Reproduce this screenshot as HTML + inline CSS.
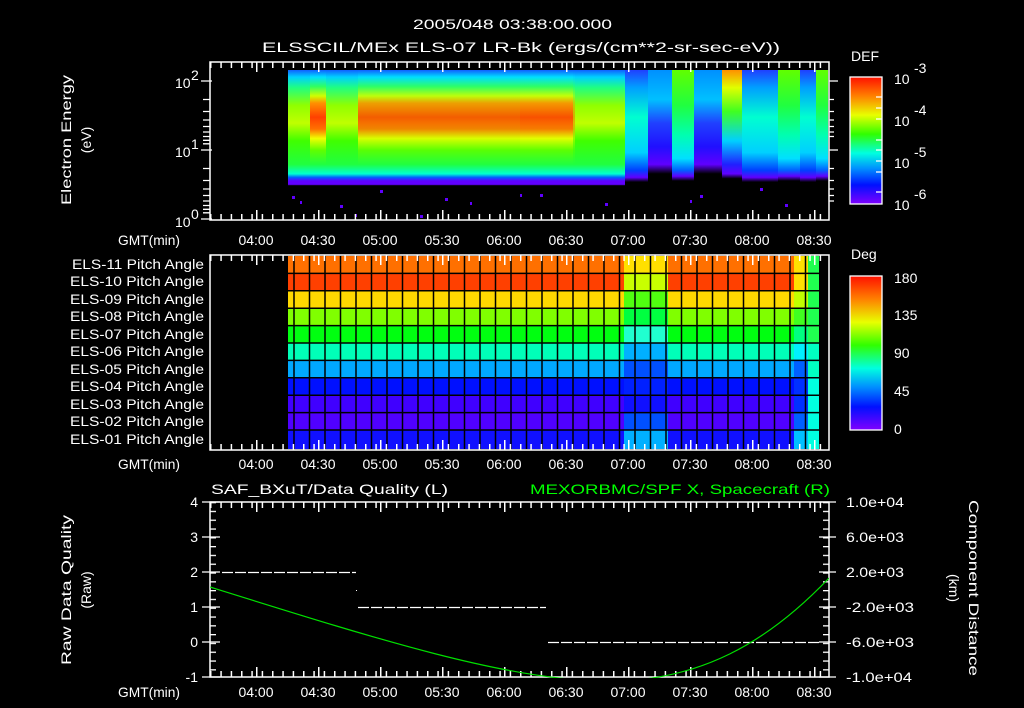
<!DOCTYPE html>
<html><head><meta charset="utf-8"><style>
html,body{margin:0;padding:0;background:#000;}
svg{display:block}
text{font-family:"Liberation Sans",sans-serif;fill:#fff;font-size:14px}
</style></head><body>
<svg width="1024" height="708" viewBox="0 0 1024 708" xmlns="http://www.w3.org/2000/svg">
<defs>
<pattern id="tkT" x="210" y="0" width="10.333" height="708" patternUnits="userSpaceOnUse"><rect x="0" y="0" width="1.5" height="708" fill="#fff"/></pattern>
<pattern id="tkMaj" x="256" y="0" width="62" height="708" patternUnits="userSpaceOnUse"><rect x="0" y="0" width="1.5" height="708" fill="#fff"/></pattern>
<pattern id="tkY" x="0" y="502" width="708" height="8.8" patternUnits="userSpaceOnUse"><rect x="0" y="0" width="1024" height="1.3" fill="#fff"/></pattern>
<linearGradient id="cb" x1="0" y1="0" x2="0" y2="1">
<stop offset="0" stop-color="#ff1000"/><stop offset="0.15" stop-color="#ff8000"/><stop offset="0.3" stop-color="#e8ff00"/><stop offset="0.45" stop-color="#30ff00"/><stop offset="0.6" stop-color="#00ffe0"/><stop offset="0.72" stop-color="#0090ff"/><stop offset="0.85" stop-color="#0010ff"/><stop offset="1" stop-color="#8000ff"/></linearGradient>
<linearGradient id="gBase" x1="0" y1="70" x2="0" y2="188" gradientUnits="userSpaceOnUse">
<stop offset="0" stop-color="#1060ff"/><stop offset="0.06" stop-color="#00d0ff"/><stop offset="0.15" stop-color="#20ff80"/><stop offset="0.3" stop-color="#90ff00"/><stop offset="0.45" stop-color="#c0ff00"/><stop offset="0.6" stop-color="#40ff00"/><stop offset="0.8" stop-color="#20ff40"/><stop offset="0.88" stop-color="#00ffd0"/><stop offset="0.91" stop-color="#0060ff"/><stop offset="0.94" stop-color="#6000ff"/><stop offset="0.97" stop-color="#6000ff"/><stop offset="0.98" stop-color="#000"/><stop offset="1" stop-color="#000"/></linearGradient>
<linearGradient id="gOr" x1="0" y1="70" x2="0" y2="188" gradientUnits="userSpaceOnUse">
<stop offset="0" stop-color="#1060ff"/><stop offset="0.06" stop-color="#00e0ff"/><stop offset="0.14" stop-color="#30ff60"/><stop offset="0.22" stop-color="#d0ff00"/><stop offset="0.28" stop-color="#ff9000"/><stop offset="0.4" stop-color="#ff4000"/><stop offset="0.5" stop-color="#ff7000"/><stop offset="0.58" stop-color="#f0ff00"/><stop offset="0.68" stop-color="#60ff00"/><stop offset="0.8" stop-color="#20ff40"/><stop offset="0.88" stop-color="#00ffd0"/><stop offset="0.91" stop-color="#0060ff"/><stop offset="0.94" stop-color="#6000ff"/><stop offset="0.97" stop-color="#6000ff"/><stop offset="0.98" stop-color="#000"/><stop offset="1" stop-color="#000"/></linearGradient>
<linearGradient id="gCy" x1="0" y1="70" x2="0" y2="188" gradientUnits="userSpaceOnUse">
<stop offset="0" stop-color="#2040ff"/><stop offset="0.15" stop-color="#00a0ff"/><stop offset="0.4" stop-color="#00ffd0"/><stop offset="0.7" stop-color="#00d0ff"/><stop offset="0.85" stop-color="#0040ff"/><stop offset="0.91" stop-color="#6000ff"/><stop offset="0.95" stop-color="#000"/><stop offset="1" stop-color="#000"/></linearGradient>
<linearGradient id="gBl" x1="0" y1="70" x2="0" y2="188" gradientUnits="userSpaceOnUse">
<stop offset="0" stop-color="#0090ff"/><stop offset="0.25" stop-color="#00c0ff"/><stop offset="0.45" stop-color="#2040ff"/><stop offset="0.65" stop-color="#2010ff"/><stop offset="0.8" stop-color="#6000ff"/><stop offset="0.88" stop-color="#000"/><stop offset="1" stop-color="#000"/></linearGradient>
<linearGradient id="gGr" x1="0" y1="70" x2="0" y2="188" gradientUnits="userSpaceOnUse">
<stop offset="0" stop-color="#60ff00"/><stop offset="0.3" stop-color="#20ff40"/><stop offset="0.55" stop-color="#00ffb0"/><stop offset="0.75" stop-color="#00e0ff"/><stop offset="0.85" stop-color="#0060ff"/><stop offset="0.9" stop-color="#6000ff"/><stop offset="0.94" stop-color="#000"/><stop offset="1" stop-color="#000"/></linearGradient>
<linearGradient id="gYo" x1="0" y1="70" x2="0" y2="188" gradientUnits="userSpaceOnUse">
<stop offset="0" stop-color="#ff9000"/><stop offset="0.15" stop-color="#e0ff00"/><stop offset="0.35" stop-color="#40ff20"/><stop offset="0.6" stop-color="#00d0ff"/><stop offset="0.8" stop-color="#2020ff"/><stop offset="0.88" stop-color="#6000ff"/><stop offset="0.92" stop-color="#000"/><stop offset="1" stop-color="#000"/></linearGradient>
</defs>

<!-- Titles -->
<text x="413" y="29" font-size="17" textLength="199" lengthAdjust="spacingAndGlyphs">2005/048 03:38:00.000</text>
<text x="262" y="52" font-size="17" textLength="518" lengthAdjust="spacingAndGlyphs">ELSSCIL/MEx ELS-07 LR-Bk  (ergs/(cm**2-sr-sec-eV))</text>

<!-- TOP PANEL -->
<rect x="288" y="70" width="540" height="118" fill="url(#gBase)"/>
<rect x="310" y="70" width="16" height="118" fill="url(#gOr)"/>
<rect x="358" y="70" width="215" height="118" fill="url(#gOr)" opacity="0.85"/>
<rect x="520" y="70" width="55" height="118" fill="url(#gOr)" opacity="0.4"/>
<rect x="625" y="70" width="25" height="118" fill="url(#gCy)"/>
<rect x="648" y="70" width="24" height="118" fill="url(#gBl)"/>
<rect x="672" y="70" width="22" height="118" fill="url(#gGr)"/>
<rect x="694" y="70" width="28" height="118" fill="url(#gBl)"/>
<rect x="722" y="70" width="20" height="118" fill="url(#gYo)"/>
<rect x="742" y="70" width="36" height="118" fill="url(#gCy)"/>
<rect x="778" y="70" width="22" height="118" fill="url(#gGr)"/>
<rect x="800" y="70" width="16" height="118" fill="url(#gCy)"/>
<rect x="816" y="70" width="12" height="118" fill="url(#gGr)"/>
<g fill="#6000ff">
<rect x="292" y="196" width="3" height="3"/><rect x="300" y="201" width="2" height="3"/><rect x="340" y="205" width="3" height="3"/><rect x="355" y="214" width="2" height="3"/><rect x="420" y="215" width="3" height="3"/><rect x="445" y="198" width="3" height="3"/><rect x="470" y="202" width="2" height="3"/><rect x="540" y="194" width="3" height="3"/><rect x="605" y="203" width="3" height="3"/><rect x="690" y="200" width="2" height="3"/><rect x="700" y="195" width="3" height="3"/><rect x="785" y="204" width="3" height="3"/><rect x="760" y="188" width="3" height="3"/><rect x="520" y="194" width="2" height="3"/><rect x="380" y="190" width="3" height="3"/>
</g>
<rect x="210" y="62" width="619" height="158" fill="none" stroke="#fff" stroke-width="1.5"/>
<rect x="210" y="62" width="619" height="6" fill="url(#tkT)"/>
<rect x="210" y="214" width="619" height="6" fill="url(#tkT)"/>
<rect x="210" y="62" width="619" height="10" fill="url(#tkMaj)"/>
<rect x="210" y="210" width="619" height="10" fill="url(#tkMaj)"/>
<g stroke="#fff" stroke-width="1.3">
<path d="M201 81H212M201 150H212M201 219H212M203 99.5H210M203 111.5H210M203 120H210M203 126.5H210M203 132H210M203 136.5H210M203 140.3H210M203 143.8H210M203 168.5H210M203 180.5H210M203 189H210M203 195.5H210M203 201H210M203 205.5H210M203 209.3H210M203 212.8H210"/>
<path d="M829 81H838M829 150H838M829 99.5H834M829 111.5H834M829 120H834M829 126.5H834M829 132H834M829 136.5H834M829 168.5H834M829 180.5H834M829 189H834M829 195.5H834M829 201H834"/>
</g>
<text x="175" y="88" font-size="15">10</text><text x="191" y="80" font-size="10">2</text>
<text x="175" y="157" font-size="15">10</text><text x="191" y="149" font-size="10">1</text>
<text x="175" y="227" font-size="15">10</text><text x="191" y="219" font-size="10">0</text>
<text transform="translate(71,140) rotate(-90)" text-anchor="middle" font-size="16" textLength="130" lengthAdjust="spacingAndGlyphs">Electron Energy</text>
<text transform="translate(91,140) rotate(-90)" text-anchor="middle" font-size="16">(eV)</text>
<g font-size="15" text-anchor="middle">
<text x="149" y="245" textLength="62" lengthAdjust="spacingAndGlyphs">GMT(min)</text>
<text x="256" y="245">04:00</text><text x="318" y="245">04:30</text><text x="380" y="245">05:00</text><text x="442" y="245">05:30</text><text x="504" y="245">06:00</text><text x="566" y="245">06:30</text><text x="628" y="245">07:00</text><text x="690" y="245">07:30</text><text x="752" y="245">08:00</text><text x="814" y="245">08:30</text>
</g>
<text x="851" y="61" font-size="17">DEF</text>
<rect x="850" y="77" width="32" height="127" fill="url(#cb)" stroke="#fff" stroke-width="1.3"/>
<g stroke="#fff" stroke-width="1.2"><path d="M876 119H882M876 161H882M876 97H882M876 108H882M876 140H882M876 150H882M876 172H882M876 192H882"/></g>
<text x="894" y="84" font-size="17">10</text><text x="914" y="73" font-size="13">-3</text>
<text x="894" y="126" font-size="17">10</text><text x="914" y="115" font-size="13">-4</text>
<text x="894" y="168" font-size="17">10</text><text x="914" y="157" font-size="13">-5</text>
<text x="894" y="210" font-size="17">10</text><text x="914" y="199" font-size="13">-6</text>

<!-- MIDDLE PANEL -->
<g>
<rect x="288" y="256" width="531" height="17.4" fill="#ff7000"/>
<rect x="288" y="273.4" width="531" height="17.4" fill="#ff4000"/>
<rect x="288" y="290.8" width="531" height="17.4" fill="#ffd800"/>
<rect x="288" y="308.2" width="531" height="17.4" fill="#80ff00"/>
<rect x="288" y="325.6" width="531" height="17.4" fill="#00ff10"/>
<rect x="288" y="343" width="531" height="17.4" fill="#00ffb8"/>
<rect x="288" y="360.4" width="531" height="17.4" fill="#00a8ff"/>
<rect x="288" y="377.8" width="531" height="17.4" fill="#0010ff"/>
<rect x="288" y="395.2" width="531" height="17.4" fill="#4000ff"/>
<rect x="288" y="412.6" width="531" height="17.4" fill="#5000ff"/>
<rect x="288" y="430" width="531" height="19" fill="#1010ff"/>
</g>
<g>
<rect x="624" y="256" width="44" height="17.4" fill="#ffe000"/>
<rect x="624" y="273.4" width="44" height="17.4" fill="#c8ff00"/>
<rect x="624" y="290.8" width="44" height="17.4" fill="#50ff10"/>
<rect x="624" y="308.2" width="44" height="17.4" fill="#00ff40"/>
<rect x="624" y="325.6" width="44" height="17.4" fill="#20ffd0"/>
<rect x="624" y="343" width="44" height="17.4" fill="#00b0ff"/>
<rect x="624" y="360.4" width="44" height="17.4" fill="#0050ff"/>
<rect x="624" y="377.8" width="44" height="17.4" fill="#0020ff"/>
<rect x="624" y="395.2" width="44" height="17.4" fill="#1010ff"/>
<rect x="624" y="412.6" width="44" height="17.4" fill="#0050ff"/>
<rect x="624" y="430" width="44" height="19" fill="#00b0ff"/>
</g>
<g>
<rect x="794" y="256" width="14" height="17.4" fill="#ffe000"/>
<rect x="794" y="273.4" width="14" height="17.4" fill="#ffe000"/>
<rect x="794" y="290.8" width="14" height="17.4" fill="#c0ff00"/>
<rect x="794" y="308.2" width="14" height="17.4" fill="#40ff20"/>
<rect x="794" y="325.6" width="14" height="17.4" fill="#00ff80"/>
<rect x="794" y="343" width="14" height="17.4" fill="#00f0ff"/>
<rect x="794" y="360.4" width="14" height="17.4" fill="#0060ff"/>
<rect x="794" y="377.8" width="14" height="17.4" fill="#0030ff"/>
<rect x="794" y="395.2" width="14" height="17.4" fill="#0030ff"/>
<rect x="794" y="412.6" width="14" height="17.4" fill="#0060ff"/>
<rect x="794" y="430" width="14" height="19" fill="#00c0ff"/>
<rect x="808" y="256" width="11" height="87" fill="#20ff50"/>
<rect x="808" y="343" width="11" height="35" fill="#00ffc0"/>
<rect x="808" y="378" width="11" height="71" fill="#00ffe0"/>
</g>
<g stroke="#000" stroke-width="1.5">
<path d="M288 273.4H819M288 290.8H819M288 308.2H819M288 325.6H819M288 343H819M288 360.4H819M288 377.8H819M288 395.2H819M288 412.6H819M288 430H819"/>
<path d="M294 256V449M309.5 256V449M325 256V449M340.5 256V449M356 256V449M371.5 256V449M387 256V449M402.5 256V449M418 256V449M433.5 256V449M449 256V449M464.5 256V449M480 256V449M495.5 256V449M511 256V449M526.5 256V449M542 256V449M557.5 256V449M573 256V449M588.5 256V449M604 256V449M619.5 256V449M635 256V449M650.5 256V449M666 256V449M681.5 256V449M697 256V449M712.5 256V449M728 256V449M743.5 256V449M759 256V449M774.5 256V449M790 256V449M805.5 256V449"/>
</g>
<rect x="210" y="255" width="619" height="195" fill="none" stroke="#fff" stroke-width="1.5"/>
<rect x="210" y="255" width="619" height="6" fill="url(#tkT)"/>
<rect x="210" y="444" width="619" height="6" fill="url(#tkT)"/>
<rect x="210" y="255" width="619" height="10" fill="url(#tkMaj)"/>
<rect x="210" y="440" width="619" height="10" fill="url(#tkMaj)"/>
<g font-size="14">
<text x="72" y="269" textLength="132" lengthAdjust="spacingAndGlyphs">ELS-11 Pitch Angle</text>
<text x="70" y="286" textLength="134" lengthAdjust="spacingAndGlyphs">ELS-10 Pitch Angle</text>
<text x="70" y="304" textLength="134" lengthAdjust="spacingAndGlyphs">ELS-09 Pitch Angle</text>
<text x="70" y="321" textLength="134" lengthAdjust="spacingAndGlyphs">ELS-08 Pitch Angle</text>
<text x="70" y="339" textLength="134" lengthAdjust="spacingAndGlyphs">ELS-07 Pitch Angle</text>
<text x="70" y="356" textLength="134" lengthAdjust="spacingAndGlyphs">ELS-06 Pitch Angle</text>
<text x="70" y="374" textLength="134" lengthAdjust="spacingAndGlyphs">ELS-05 Pitch Angle</text>
<text x="70" y="391" textLength="134" lengthAdjust="spacingAndGlyphs">ELS-04 Pitch Angle</text>
<text x="70" y="409" textLength="134" lengthAdjust="spacingAndGlyphs">ELS-03 Pitch Angle</text>
<text x="70" y="426" textLength="134" lengthAdjust="spacingAndGlyphs">ELS-02 Pitch Angle</text>
<text x="70" y="444" textLength="134" lengthAdjust="spacingAndGlyphs">ELS-01 Pitch Angle</text>
</g>
<g font-size="15" text-anchor="middle">
<text x="149" y="469" textLength="62" lengthAdjust="spacingAndGlyphs">GMT(min)</text>
<text x="256" y="469">04:00</text><text x="318" y="469">04:30</text><text x="380" y="469">05:00</text><text x="442" y="469">05:30</text><text x="504" y="469">06:00</text><text x="566" y="469">06:30</text><text x="628" y="469">07:00</text><text x="690" y="469">07:30</text><text x="752" y="469">08:00</text><text x="814" y="469">08:30</text>
</g>
<text x="851" y="259" font-size="17">Deg</text>
<rect x="850" y="276" width="32" height="154" fill="url(#cb)" stroke="#fff" stroke-width="1.3"/>
<text x="894" y="283" font-size="17">180</text>
<text x="894" y="320" font-size="17">135</text>
<text x="894" y="358" font-size="17">90</text>
<text x="894" y="396" font-size="17">45</text>
<text x="894" y="434" font-size="17">0</text>

<!-- BOTTOM PANEL -->
<text x="211" y="494" font-size="17" textLength="237" lengthAdjust="spacingAndGlyphs">SAF_BXuT/Data Quality (L)</text>
<text x="530" y="494" font-size="17" textLength="300" lengthAdjust="spacingAndGlyphs" style="fill:#00ff00">MEXORBMC/SPF X, Spacecraft (R)</text>
<rect x="210" y="502" width="619" height="175" fill="none" stroke="#fff" stroke-width="1.5"/>
<rect x="210" y="502" width="619" height="6" fill="url(#tkT)"/>
<rect x="210" y="671" width="619" height="6" fill="url(#tkT)"/>
<rect x="210" y="502" width="619" height="10" fill="url(#tkMaj)"/>
<rect x="210" y="667" width="619" height="10" fill="url(#tkMaj)"/>
<rect x="210" y="502" width="6" height="176" fill="url(#tkY)"/>
<rect x="823" y="502" width="6" height="176" fill="url(#tkY)"/>
<g stroke="#fff" stroke-width="1.3"><path d="M202 502H220M202 537H220M202 572H220M202 607H220M202 642H220M202 677H220M819 502H836M819 537H836M819 572H836M819 607H836M819 642H836M819 677H836"/></g>
<g font-size="15" text-anchor="end">
<text x="198" y="507">4</text><text x="198" y="542">3</text><text x="198" y="577">2</text><text x="198" y="612">1</text><text x="198" y="647">0</text><text x="198" y="682">-1</text>
</g>
<g font-size="14">
<text x="846" y="507" textLength="58" lengthAdjust="spacingAndGlyphs">1.0e+04</text><text x="846" y="542" textLength="58" lengthAdjust="spacingAndGlyphs">6.0e+03</text><text x="846" y="577" textLength="58" lengthAdjust="spacingAndGlyphs">2.0e+03</text><text x="846" y="612" textLength="68" lengthAdjust="spacingAndGlyphs">-2.0e+03</text><text x="846" y="647" textLength="68" lengthAdjust="spacingAndGlyphs">-6.0e+03</text><text x="846" y="682" textLength="66" lengthAdjust="spacingAndGlyphs">-1.0e+04</text>
</g>
<text transform="translate(71,590) rotate(-90)" text-anchor="middle" font-size="16" textLength="150" lengthAdjust="spacingAndGlyphs">Raw Data Quality</text>
<text transform="translate(91,590) rotate(-90)" text-anchor="middle" font-size="16">(Raw)</text>
<text transform="translate(969,588) rotate(90)" text-anchor="middle" font-size="16" textLength="176" lengthAdjust="spacingAndGlyphs">Component Distance</text>
<text transform="translate(949,588) rotate(90)" text-anchor="middle" font-size="16">(km)</text>
<g stroke="#fff" stroke-width="1.2" stroke-dasharray="11,2">
<path d="M222 572.5H356M358 607.5H546M548 642.5H819"/>
</g>
<rect x="356" y="590" width="1" height="1" fill="#fff"/>
<svg x="210" y="502" width="619" height="176" viewBox="210 502 619 176" overflow="hidden">
<path fill="none" stroke="#00e000" stroke-width="1.2" d="M210,587 C380,640 500,678 600,681 C700,684 770,640 829,578"/>
</svg>
<g font-size="15" text-anchor="middle">
<text x="149" y="697" textLength="62" lengthAdjust="spacingAndGlyphs">GMT(min)</text>
<text x="256" y="697">04:00</text><text x="318" y="697">04:30</text><text x="380" y="697">05:00</text><text x="442" y="697">05:30</text><text x="504" y="697">06:00</text><text x="566" y="697">06:30</text><text x="628" y="697">07:00</text><text x="690" y="697">07:30</text><text x="752" y="697">08:00</text><text x="814" y="697">08:30</text>
</g>
</svg>
</body></html>
